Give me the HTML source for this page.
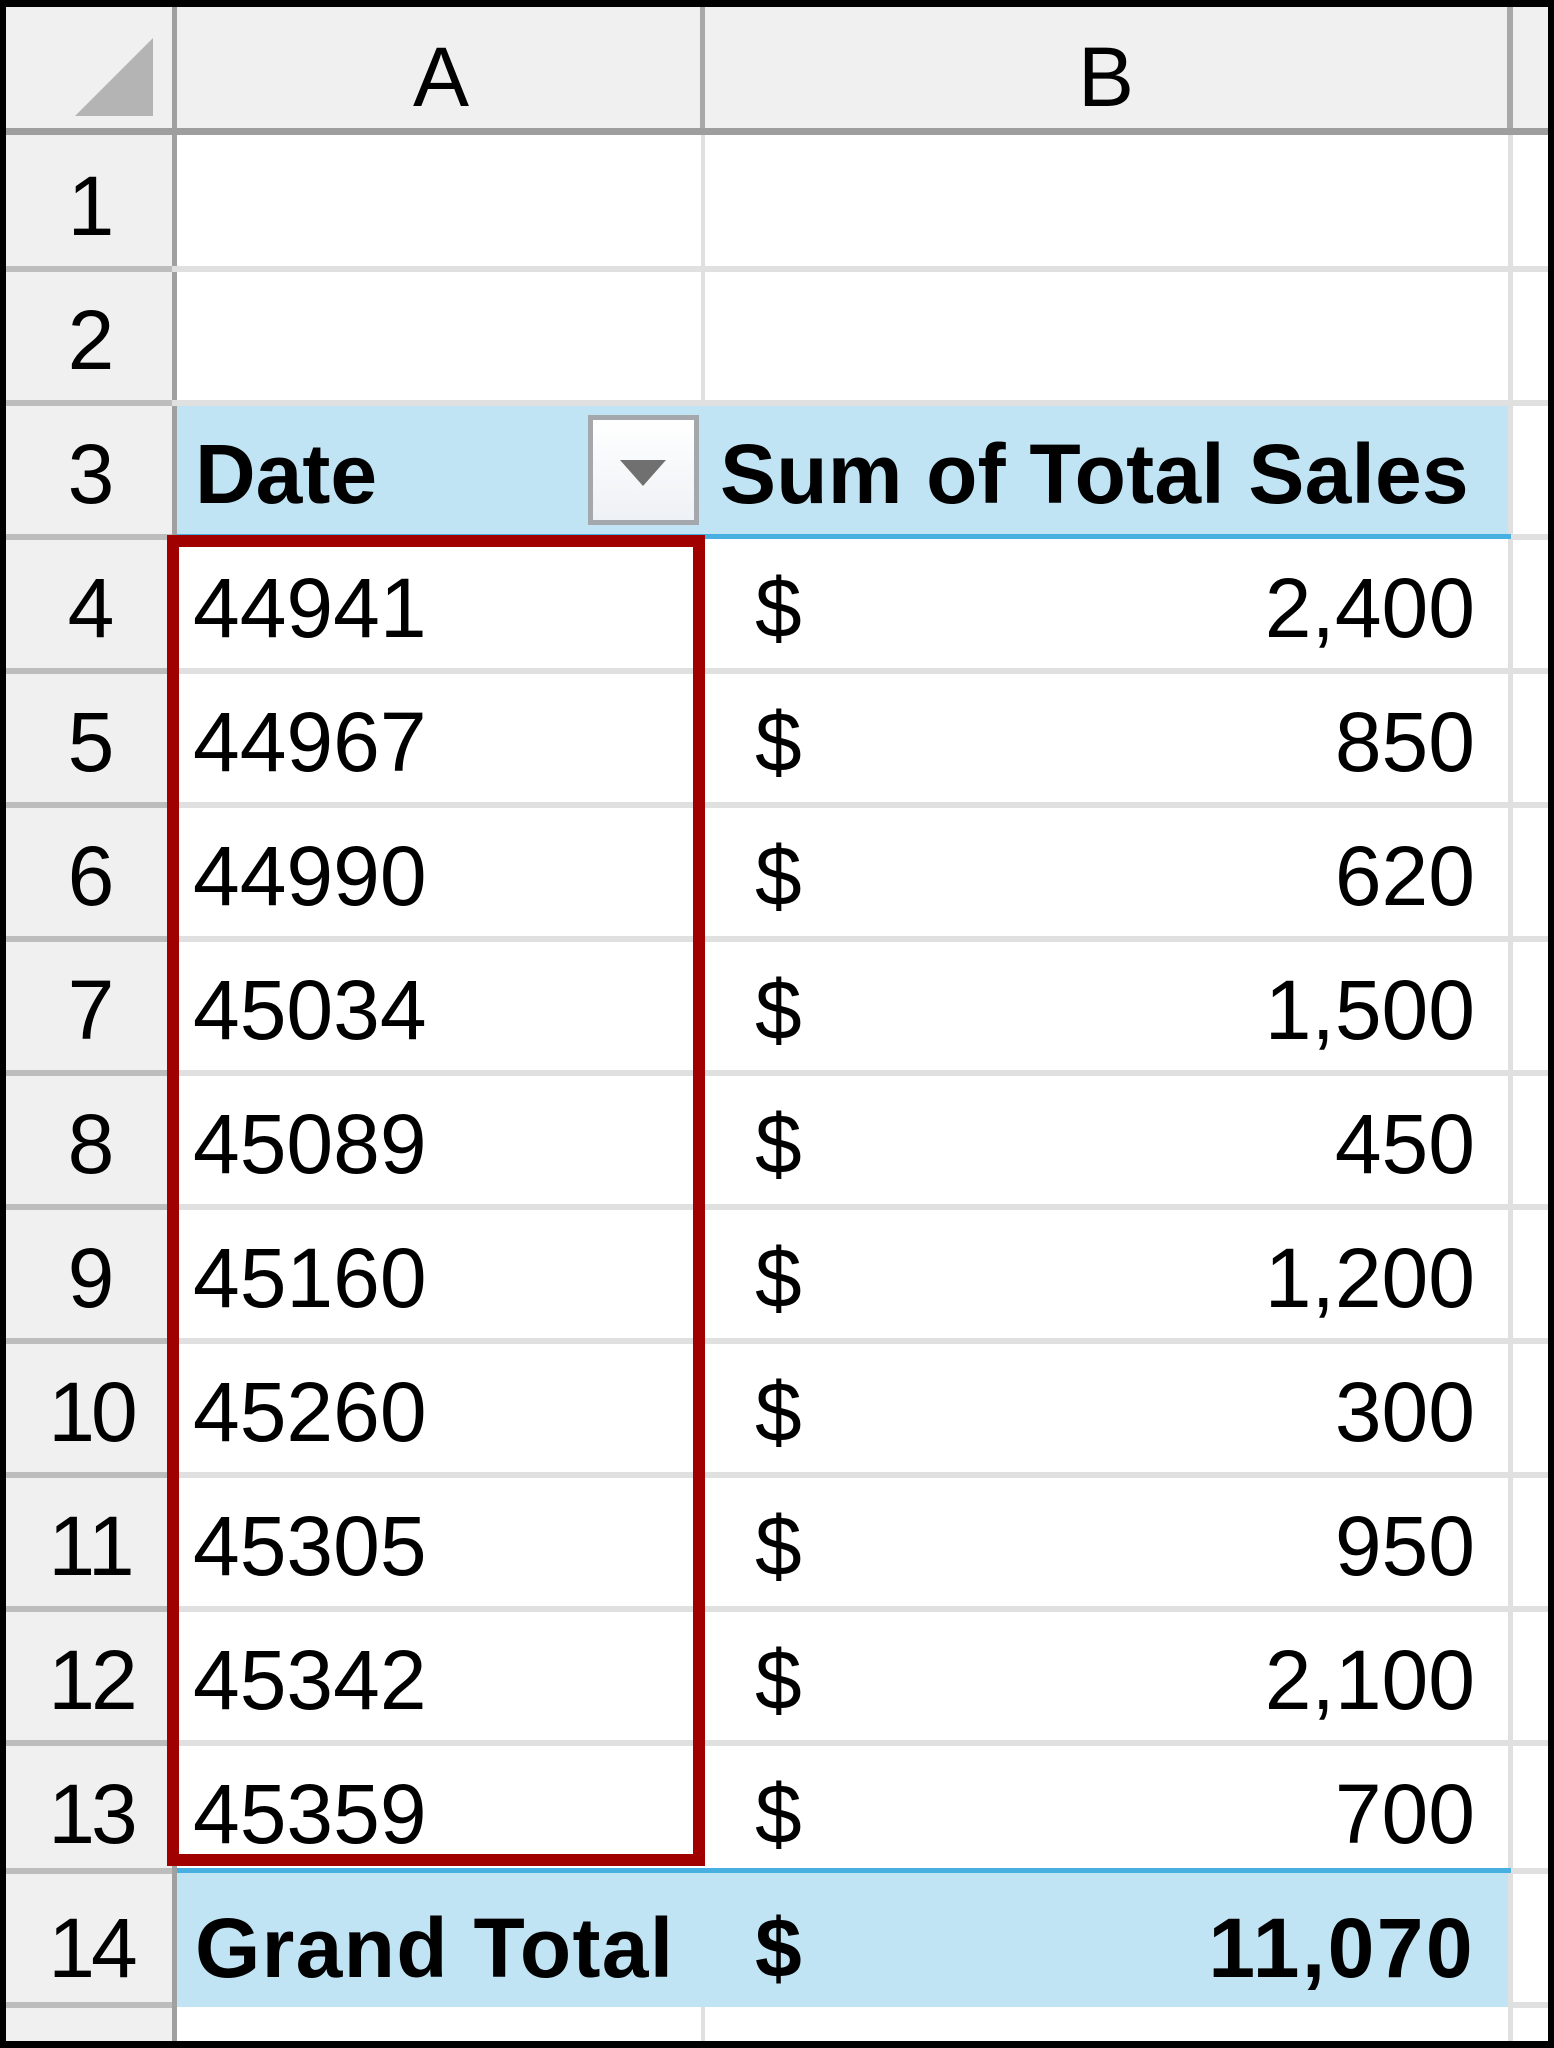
<!DOCTYPE html>
<html><head><meta charset="utf-8"><style>
*{margin:0;padding:0;box-sizing:border-box}
body{width:1554px;height:2048px;background:#000;position:relative;overflow:hidden;font-family:"Liberation Sans",sans-serif;color:#000}
.a{position:absolute}
.t{position:absolute;font-size:84px;line-height:84px;white-space:nowrap}
.b{font-weight:bold}
</style></head><body>
<div class="a" style="left:6px;top:7px;width:1542px;height:2034px;background:#fff"></div>
<div class="a" style="left:6px;top:7px;width:1542px;height:128px;background:#f0f0f0"></div>
<div class="a" style="left:6px;top:7px;width:170px;height:2034px;background:#f0f0f0"></div>
<svg class="a" style="left:75px;top:38px" width="80" height="80"><polygon points="78,0 78,78 0,78" fill="#b4b4b4"/></svg>
<div class="a" style="left:177px;top:403px;width:1334px;height:134px;background:#c0e4f4"></div>
<div class="a" style="left:177px;top:1873px;width:1334px;height:134px;background:#c0e4f4"></div>
<div class="a" style="left:172px;top:7px;width:5px;height:2034px;background:#a0a0a0"></div>
<div class="a" style="left:700px;top:7px;width:5px;height:128px;background:#a8a8a8"></div>
<div class="a" style="left:1507px;top:7px;width:6px;height:128px;background:#a8a8a8"></div>
<div class="a" style="left:701px;top:135px;width:4px;height:268px;background:#e0e0e0"></div>
<div class="a" style="left:701px;top:2007px;width:4px;height:34px;background:#e0e0e0"></div>
<div class="a" style="left:1508px;top:135px;width:5px;height:1906px;background:#e0e0e0"></div>
<div class="a" style="left:6px;top:128px;width:1542px;height:7px;background:#9e9e9e"></div>
<div class="a" style="left:6px;top:266px;width:1542px;height:6px;background:#e0e0e0"></div>
<div class="a" style="left:6px;top:266px;width:166px;height:6px;background:#bdbdbd"></div>
<div class="a" style="left:6px;top:400px;width:1542px;height:6px;background:#e0e0e0"></div>
<div class="a" style="left:6px;top:400px;width:166px;height:6px;background:#bdbdbd"></div>
<div class="a" style="left:6px;top:534px;width:166px;height:6px;background:#bdbdbd"></div>
<div class="a" style="left:177px;top:534px;width:1334px;height:5px;background:#47b0e0"></div>
<div class="a" style="left:1513px;top:534px;width:35px;height:6px;background:#e0e0e0"></div>
<div class="a" style="left:6px;top:668px;width:1542px;height:6px;background:#e0e0e0"></div>
<div class="a" style="left:6px;top:668px;width:166px;height:6px;background:#bdbdbd"></div>
<div class="a" style="left:6px;top:802px;width:1542px;height:6px;background:#e0e0e0"></div>
<div class="a" style="left:6px;top:802px;width:166px;height:6px;background:#bdbdbd"></div>
<div class="a" style="left:6px;top:936px;width:1542px;height:6px;background:#e0e0e0"></div>
<div class="a" style="left:6px;top:936px;width:166px;height:6px;background:#bdbdbd"></div>
<div class="a" style="left:6px;top:1070px;width:1542px;height:6px;background:#e0e0e0"></div>
<div class="a" style="left:6px;top:1070px;width:166px;height:6px;background:#bdbdbd"></div>
<div class="a" style="left:6px;top:1204px;width:1542px;height:6px;background:#e0e0e0"></div>
<div class="a" style="left:6px;top:1204px;width:166px;height:6px;background:#bdbdbd"></div>
<div class="a" style="left:6px;top:1338px;width:1542px;height:6px;background:#e0e0e0"></div>
<div class="a" style="left:6px;top:1338px;width:166px;height:6px;background:#bdbdbd"></div>
<div class="a" style="left:6px;top:1472px;width:1542px;height:6px;background:#e0e0e0"></div>
<div class="a" style="left:6px;top:1472px;width:166px;height:6px;background:#bdbdbd"></div>
<div class="a" style="left:6px;top:1606px;width:1542px;height:6px;background:#e0e0e0"></div>
<div class="a" style="left:6px;top:1606px;width:166px;height:6px;background:#bdbdbd"></div>
<div class="a" style="left:6px;top:1740px;width:1542px;height:6px;background:#e0e0e0"></div>
<div class="a" style="left:6px;top:1740px;width:166px;height:6px;background:#bdbdbd"></div>
<div class="a" style="left:6px;top:1868px;width:166px;height:6px;background:#bdbdbd"></div>
<div class="a" style="left:177px;top:1868px;width:1334px;height:5px;background:#47b0e0"></div>
<div class="a" style="left:1513px;top:1868px;width:35px;height:6px;background:#e0e0e0"></div>
<div class="a" style="left:6px;top:2002px;width:166px;height:6px;background:#bdbdbd"></div>
<div class="a" style="left:1513px;top:2002px;width:35px;height:6px;background:#e0e0e0"></div>
<div class="a" style="left:167px;top:535px;width:538px;height:1331px;border:12px solid #a00000"></div>
<div class="a" style="left:588px;top:415px;width:111px;height:110px;border:5px solid #a4a8ac;background:linear-gradient(#fff,#eef1f5)"></div>
<svg class="a" style="left:620px;top:460px" width="48" height="30"><polygon points="0,0 46,0 23,26" fill="#707070"/></svg>
<div class="t" style="left:0;top:35px;width:882px;text-align:center">A</div>
<div class="t" style="left:705px;top:35px;width:802px;text-align:center">B</div>
<div class="t" style="left:6px;top:164px;width:170px;text-align:center">1</div>
<div class="t" style="left:6px;top:298px;width:170px;text-align:center">2</div>
<div class="t" style="left:6px;top:432px;width:170px;text-align:center">3</div>
<div class="t" style="left:6px;top:566px;width:170px;text-align:center">4</div>
<div class="t" style="left:6px;top:700px;width:170px;text-align:center">5</div>
<div class="t" style="left:6px;top:834px;width:170px;text-align:center">6</div>
<div class="t" style="left:6px;top:968px;width:170px;text-align:center">7</div>
<div class="t" style="left:6px;top:1102px;width:170px;text-align:center">8</div>
<div class="t" style="left:6px;top:1236px;width:170px;text-align:center">9</div>
<div class="t" style="left:6px;top:1370px;width:170px;text-align:center;letter-spacing:-4px">10</div>
<div class="t" style="left:6px;top:1504px;width:170px;text-align:center;letter-spacing:-1px">11</div>
<div class="t" style="left:6px;top:1638px;width:170px;text-align:center;letter-spacing:-4px">12</div>
<div class="t" style="left:6px;top:1772px;width:170px;text-align:center;letter-spacing:-4px">13</div>
<div class="t" style="left:6px;top:1906px;width:170px;text-align:center;letter-spacing:-4px">14</div>
<div class="t b" style="left:195px;top:432px;letter-spacing:0px">Date</div>
<div class="t b" style="left:720px;top:432px;letter-spacing:0.2px">Sum of Total Sales</div>
<div class="t" style="left:193px;top:566px">44941</div><div class="t" style="left:755px;top:566px">$</div><div class="t" style="right:79px;top:566px">2,400</div>
<div class="t" style="left:193px;top:700px">44967</div><div class="t" style="left:755px;top:700px">$</div><div class="t" style="right:79px;top:700px">850</div>
<div class="t" style="left:193px;top:834px">44990</div><div class="t" style="left:755px;top:834px">$</div><div class="t" style="right:79px;top:834px">620</div>
<div class="t" style="left:193px;top:968px">45034</div><div class="t" style="left:755px;top:968px">$</div><div class="t" style="right:79px;top:968px">1,500</div>
<div class="t" style="left:193px;top:1102px">45089</div><div class="t" style="left:755px;top:1102px">$</div><div class="t" style="right:79px;top:1102px">450</div>
<div class="t" style="left:193px;top:1236px">45160</div><div class="t" style="left:755px;top:1236px">$</div><div class="t" style="right:79px;top:1236px">1,200</div>
<div class="t" style="left:193px;top:1370px">45260</div><div class="t" style="left:755px;top:1370px">$</div><div class="t" style="right:79px;top:1370px">300</div>
<div class="t" style="left:193px;top:1504px">45305</div><div class="t" style="left:755px;top:1504px">$</div><div class="t" style="right:79px;top:1504px">950</div>
<div class="t" style="left:193px;top:1638px">45342</div><div class="t" style="left:755px;top:1638px">$</div><div class="t" style="right:79px;top:1638px">2,100</div>
<div class="t" style="left:193px;top:1772px">45359</div><div class="t" style="left:755px;top:1772px">$</div><div class="t" style="right:79px;top:1772px">700</div>
<div class="t b" style="left:195px;top:1906px;letter-spacing:1.3px">Grand Total</div><div class="t b" style="left:755px;top:1906px">$</div><div class="t b" style="right:79px;top:1906px;letter-spacing:2.4px">11,070</div>
</body></html>
